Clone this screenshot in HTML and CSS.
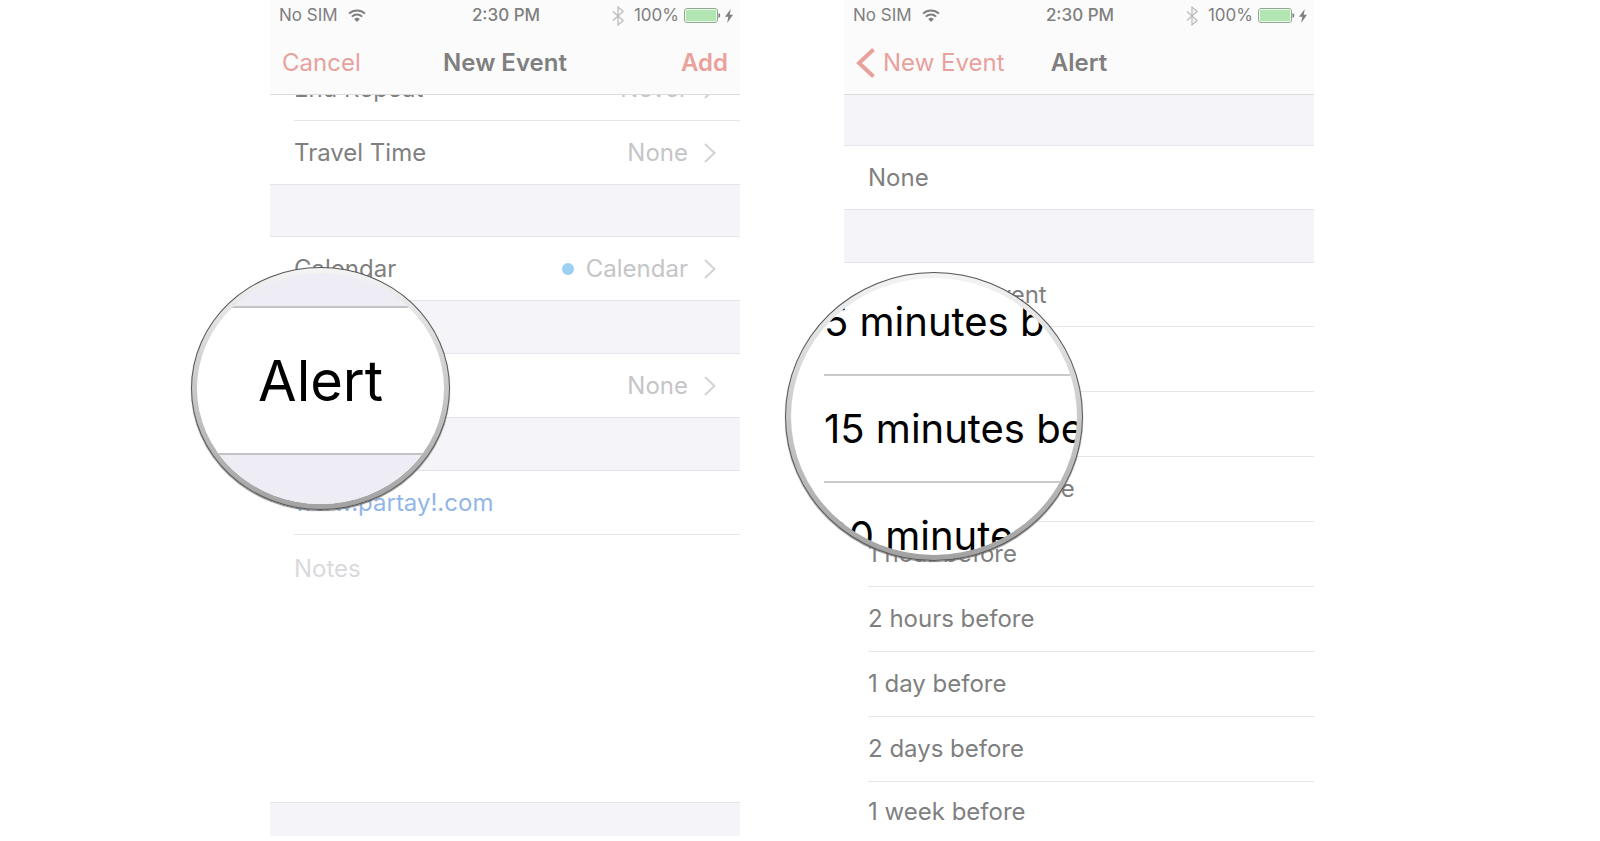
FILE: index.html
```html
<!DOCTYPE html>
<html lang="en">
<head>
<meta charset="utf-8">
<meta name="viewport" content="width=device-width, initial-scale=1">
<title>New Event – Alert</title>
<link rel="stylesheet" href="styles.css">
</head>
<body>
<svg class="defs" aria-hidden="true">
  <symbol id="wifi" viewBox="0 0 18 13">
    <path d="M1 4.6a11.6 11.6 0 0 1 16 0M3.9 7.6a7.4 7.4 0 0 1 10.2 0" fill="none" stroke="currentColor" stroke-width="2"/>
    <path d="M6.2 10.1a4 4 0 0 1 5.6 0L9 13z" fill="currentColor"/>
  </symbol>
  <symbol id="bluetooth" viewBox="0 0 12 20">
    <path d="M1 5.5l10 9-5 4.5V1l5 4.5-10 9" fill="none" stroke="currentColor" stroke-width="1.3"/>
  </symbol>
  <symbol id="battery" viewBox="0 0 37 15">
    <rect x=".5" y=".5" width="33" height="14" rx="2.5" fill="#fff" stroke="#8fa990"/>
    <rect x="1.8" y="1.8" width="30.4" height="11.4" rx="1.2" fill="#b1e5b1"/>
    <path d="M34.5 5c2.300.8 2.300 4.200 0 5z" fill="#777"/>
  </symbol>
  <symbol id="bolt" viewBox="0 0 8 14">
    <path d="M5.800 0L0 7.800h3.300L2.200 14 8 5.800H4.700z" fill="currentColor"/>
  </symbol>
  <symbol id="chevron" viewBox="0 0 12 20">
    <path d="M1 1l9.500 9L1 19" fill="none" stroke="currentColor" stroke-width="2"/>
  </symbol>
</svg>

<main class="stage">
  <section class="phone phone-event">
    <header class="bar">
      <div class="status">
        <div class="status-left"><span>No SIM</span><svg class="wifi"><use href="#wifi"/></svg></div>
        <time>2:30 PM</time>
        <div class="status-right"><svg class="bluetooth"><use href="#bluetooth"/></svg><span>100%</span><svg class="battery"><use href="#battery"/></svg><svg class="bolt"><use href="#bolt"/></svg></div>
      </div>
      <nav class="nav">
        <button class="nav-button" type="button">Cancel</button>
        <h1>New Event</h1>
        <button class="nav-button strong" type="button">Add</button>
      </nav>
    </header>
    <div class="group scrolled">
      <button class="row" type="button"><span>End Repeat</span><span class="value">Never</span><svg class="chevron"><use href="#chevron"/></svg></button>
      <button class="row" type="button"><span>Travel Time</span><span class="value">None</span><svg class="chevron"><use href="#chevron"/></svg></button>
    </div>
    <div class="group">
      <button class="row" type="button"><span>Calendar</span><span class="value dotted">Calendar</span><svg class="chevron"><use href="#chevron"/></svg></button>
    </div>
    <div class="group">
      <button class="row" type="button" aria-label="Alert"><span class="value">None</span><svg class="chevron"><use href="#chevron"/></svg></button>
    </div>
    <div class="group last">
      <div class="row"><a href="#url">www.partay!.com</a></div>
      <textarea class="notes" aria-label="Notes" placeholder="Notes"></textarea>
    </div>
    <div class="lens lens-alert">
      <div class="glass"><div class="lens-band"></div><div class="lens-row">Alert</div><div class="lens-band"></div></div>
    </div>
  </section>

  <section class="phone phone-alert">
    <header class="bar">
      <div class="status">
        <div class="status-left"><span>No SIM</span><svg class="wifi"><use href="#wifi"/></svg></div>
        <time>2:30 PM</time>
        <div class="status-right"><svg class="bluetooth"><use href="#bluetooth"/></svg><span>100%</span><svg class="battery"><use href="#battery"/></svg><svg class="bolt"><use href="#bolt"/></svg></div>
      </div>
      <nav class="nav">
        <button class="nav-button" type="button"><svg class="back" viewBox="0 0 19 30"><path d="M17.500 1.500L3 15l14.500 13.500" fill="none" stroke="currentColor" stroke-width="4"/></svg>New Event</button>
        <h1>Alert</h1>
      </nav>
    </header>
    <div class="group first">
      <button class="row" type="button">None</button>
    </div>
    <div class="group options">
      <button class="row" type="button">At time of event</button>
      <button class="row" type="button" aria-label="5 minutes before"></button>
      <button class="row" type="button" aria-label="15 minutes before"></button>
      <button class="row" type="button">30 minutes before</button>
      <button class="row" type="button">1 hour before</button>
      <button class="row" type="button">2 hours before</button>
      <button class="row" type="button">1 day before</button>
      <button class="row" type="button">2 days before</button>
      <button class="row" type="button">1 week before</button>
    </div>
    <div class="lens lens-minutes">
      <div class="glass"><div class="lens-row">5 minutes before</div><div class="lens-row">15 minutes before</div><div class="lens-row">30 minutes before</div></div>
    </div>
  </section>
</main>
</body>
</html>
```
FILE: styles.css
```css
* { box-sizing: border-box; }

body {
  margin: 0;
  background: #fff;
  color: #7f7f7f;
  font-family: Inter, "Liberation Sans", sans-serif;
  font-size: 24px;
  line-height: 30px;
}

.defs { position: absolute; width: 0; height: 0; }

button {
  font: inherit;
  color: inherit;
  background: none;
  border: 0;
  padding: 0;
  text-align: left;
  cursor: pointer;
}

.stage {
  display: grid;
  grid-template-columns: 270fr 470fr 104fr 470fr 286fr;
  align-items: start;
}

.phone { position: relative; background: #f4f4f9; }
.phone-event { grid-column: 2; padding-bottom: 33px; }
.phone-alert { grid-column: 4; }

/* Status and navigation bars */
.bar {
  position: relative;
  z-index: 1;
  background: #fbfbfc;
  border-bottom: 1px solid #dcdcde;
}

.status {
  display: grid;
  grid-template-columns: 1fr auto 1fr;
  align-items: center;
  height: 31px;
  padding: 0 7px 0 9px;
  font-size: 17px;
  line-height: 31px;
}

.status time { font-weight: 500; }
.status-left, .status-right { display: flex; align-items: center; }
.status-left { gap: 10px; }
.status-right { justify-content: flex-end; }
.wifi { width: 18px; height: 13px; }
.bluetooth { width: 12px; height: 20px; margin-right: 10px; color: #bdbdbf; }
.battery { width: 37px; height: 15px; margin: 0 4px 0 5px; }
.bolt { width: 8px; height: 14px; }

.nav {
  display: grid;
  grid-template-columns: 1fr auto 1fr;
  align-items: center;
  height: 63px;
  padding: 0 12px;
}

.nav h1 { margin: 0; font-size: 24px; font-weight: 600; }
.nav-button { display: flex; align-items: center; gap: 8px; color: #e9a19c; white-space: nowrap; }
.nav-button.strong { justify-self: end; font-weight: 600; }
.back { width: 19px; height: 30px; }

/* Grouped lists */
.group {
  margin-bottom: 52px;
  padding-left: 24px;
  background: #fff;
  border: solid #e4e4e9;
  border-width: 1px 0;
}

.group.scrolled { margin-top: -39px; margin-bottom: 51px; }
.group.first { margin-top: 50px; }
.group.last { margin-bottom: 0; }

.row {
  display: flex;
  align-items: center;
  width: 100%;
  height: 63px;
  padding-right: 24px;
}

.row + .row, .row + .notes { border-top: 1px solid #e6e6e8; }
.row + .row { height: 64px; }
.row a { color: #93b6e8; text-decoration: none; }
.value { margin-left: auto; color: #c5c5c7; }
.chevron { width: 12px; height: 20px; margin-left: 16px; color: #d3d3d6; }

.dotted { display: flex; align-items: center; gap: 12px; }
.dotted::before { content: ""; width: 12px; height: 12px; border-radius: 50%; background: #9bd0f2; }

.notes {
  display: block;
  width: 100%;
  height: 268px;
  padding: 19px 0;
  border: 0;
  outline: 0;
  resize: none;
  background: none;
  font: inherit;
  color: inherit;
}
.notes::placeholder { color: #dadadc; opacity: 1; }

.options { margin-bottom: 0; border-bottom: 0; }
.options .row + .row { height: 65px; }
.options .row:last-child { height: 60px; }

/* Magnifying lenses laid over the lists */
.lens {
  position: absolute;
  z-index: 2;
  padding: 5px;
  border: 1px solid #555;
  border-radius: 50%;
  background: linear-gradient(#f4f4f4, #cdcdcd 45%, #a2a2a2);
  box-shadow: 0 1px 1px #777;
}

.glass {
  height: 100%;
  overflow: hidden;
  border-radius: 50%;
  background: #fff;
  color: #000;
  white-space: nowrap;
}

.lens-alert { left: -79px; top: 267px; width: 259px; height: 243px; }
.lens-alert .lens-band { height: 33px; background: #eeedf5; }
.lens-alert .lens-band:last-child { height: 60px; }
.lens-alert .lens-row {
  display: flex;
  align-items: center;
  height: 149px;
  padding-left: 61px;
  border: solid #c3c3c5;
  border-width: 2px 0;
  font-size: 56px;
}

.lens-minutes { left: -59px; top: 272px; width: 298px; height: 289px; }
.lens-minutes .lens-row {
  height: 107px;
  margin-left: 33px;
  border-bottom: 2px solid #cacacc;
  font-size: 40px;
  line-height: 105px;
}
.lens-minutes .lens-row:first-child { margin-top: -9px; }
```
